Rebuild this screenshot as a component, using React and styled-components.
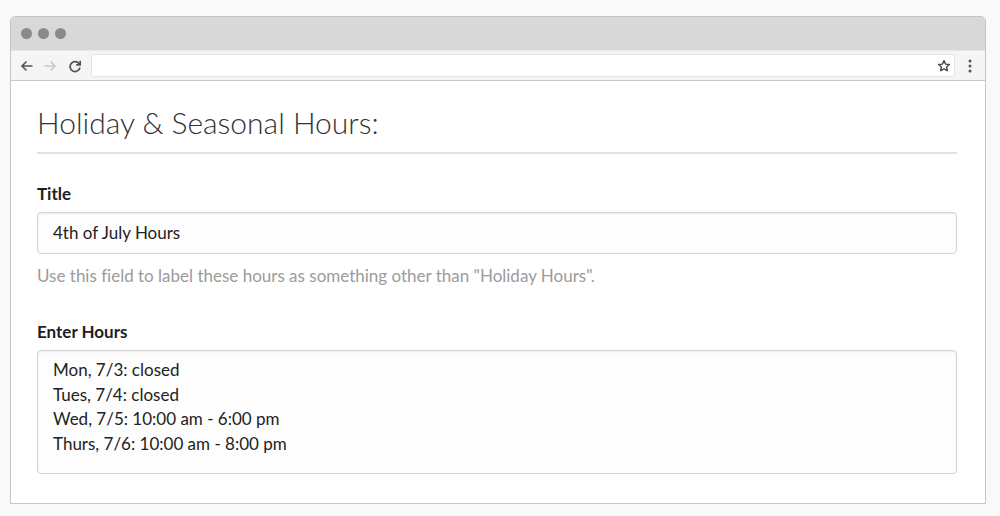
import styled, { createGlobalStyle } from 'styled-components';

const GlobalStyle = createGlobalStyle`
  html, body {
    margin: 0;
    padding: 0;
    background: #f9f9f9;
    font-family: Lato, "Liberation Sans", sans-serif;
    font-variant-ligatures: none;
  }
  * {
    box-sizing: border-box;
  }
`;

const Page = styled.div`
  width: 1000px;
  height: 516px;
  padding: 16px 14px 0 10px;
`;

const Window = styled.div`
  width: 976px;
  height: 488px;
  border: 1px solid #c4c4c4;
  border-radius: 5px 5px 0 0;
  background: #fff;
  display: flex;
  flex-direction: column;
  overflow: hidden;
`;

const TitleBar = styled.div`
  height: 33px;
  background: #d8d8d8;
  display: flex;
  align-items: center;
  gap: 6px;
  padding-left: 10px;
`;

const Dot = styled.span`
  width: 11px;
  height: 11px;
  border-radius: 50%;
  background: #8a8a8a;
`;

const Toolbar = styled.div`
  height: 31px;
  background: #f5f5f5;
  border-top: 1px solid #e6e6e6;
  border-bottom: 1px solid #c8c8c8;
  display: flex;
  align-items: center;
  padding: 0 5px 0 6px;
`;

const NavButton = styled.span`
  width: 20px;
  height: 20px;
  flex-shrink: 0;
  display: flex;
  align-items: center;
  justify-content: center;
  margin-right: ${(p) => p.$gap || 0}px;
  color: ${(p) => (p.$disabled ? '#c9c9c9' : '#555')};
`;

const UrlBar = styled.div`
  flex: 1;
  height: 23px;
  background: #fff;
  border: 1px solid #e4e4e4;
  border-radius: 3px;
  display: flex;
  align-items: center;
  justify-content: flex-end;
  margin: 0 5px 0 6px;
`;

const Content = styled.div`
  flex: 1;
  padding: 23px 28px 0 26px;
`;

const Heading = styled.h1`
  margin: 0;
  font-weight: 300;
  font-size: 30px;
  line-height: 36px;
  color: #333;
  padding-bottom: 12px;
  border-bottom: 2px solid #e2e2e2;
`;

const Field = styled.div`
  margin-top: ${(p) => p.$top}px;
`;

const Label = styled.div`
  font-weight: 700;
  font-size: 17px;
  line-height: 20px;
  color: #1e1e1e;
  margin-bottom: 8px;
`;

const Box = styled.div`
  border: 1px solid #d3d3d3;
  border-radius: 4px;
  background: #fdfdfd;
  box-shadow: inset 0 1px 2px rgba(0, 0, 0, 0.07);
  padding: ${(p) => p.$pad};
  height: ${(p) => p.$height}px;
  font-size: 17px;
  line-height: 24.7px;
  color: #222;
`;

const Help = styled.div`
  margin-top: 12px;
  font-size: 17px;
  line-height: 20px;
  color: #9b9b9b;
`;

const Arrow = ({ flip }) => (
  <svg width="14" height="14" viewBox="0 0 14 14" fill="none" stroke="currentColor" strokeWidth="1.6"
    style={flip ? { transform: 'scaleX(-1)' } : undefined}>
    <path d="M12.5 7H2M6.5 2.5L2 7l4.5 4.5" />
  </svg>
);

const Reload = () => (
  <svg width="14" height="14" viewBox="0 0 14 14" fill="none" stroke="currentColor" strokeWidth="1.7">
    <path d="M11.5 5.2A5 5 0 1 0 12 8.5" />
    <path d="M12.2 1.8v4h-4" fill="none" />
  </svg>
);

const Star = () => (
  <svg width="14" height="14" viewBox="0 0 24 24" fill="none" stroke="#444" strokeWidth="2.3" strokeLinejoin="round">
    <path d="M12 2.8l2.8 6 6.4.6-4.9 4.3 1.5 6.4L12 16.8l-5.8 3.3 1.5-6.4-4.9-4.3 6.4-.6z" />
  </svg>
);

const Kebab = () => (
  <svg width="4" height="14" viewBox="0 0 4 14" fill="#555">
    <circle cx="2" cy="2" r="1.5" />
    <circle cx="2" cy="7" r="1.5" />
    <circle cx="2" cy="12" r="1.5" />
  </svg>
);

const hours = [
  'Mon, 7/3: closed',
  'Tues, 7/4: closed',
  'Wed, 7/5: 10:00 am - 6:00 pm',
  'Thurs, 7/6: 10:00 am - 8:00 pm',
];

export default function App() {
  return (
    <>
      <GlobalStyle />
      <Page>
        <Window>
          <TitleBar>
            <Dot />
            <Dot />
            <Dot />
          </TitleBar>
          <Toolbar>
            <NavButton $gap={3}><Arrow /></NavButton>
            <NavButton $gap={5} $disabled><Arrow flip /></NavButton>
            <NavButton><Reload /></NavButton>
            <UrlBar>
              <NavButton><Star /></NavButton>
            </UrlBar>
            <NavButton><Kebab /></NavButton>
          </Toolbar>
          <Content>
            <Heading>Holiday &amp; Seasonal Hours:</Heading>
            <Field $top={30}>
              <Label>Title</Label>
              <Box $pad="8px 15px" $height={42}>4th of July Hours</Box>
              <Help>Use this field to label these hours as something other than "Holiday Hours".</Help>
            </Field>
            <Field $top={36}>
              <Label>Enter Hours</Label>
              <Box $pad="7px 15px" $height={124}>
                {hours.map((h) => (
                  <div key={h}>{h}</div>
                ))}
              </Box>
            </Field>
          </Content>
        </Window>
      </Page>
    </>
  );
}
